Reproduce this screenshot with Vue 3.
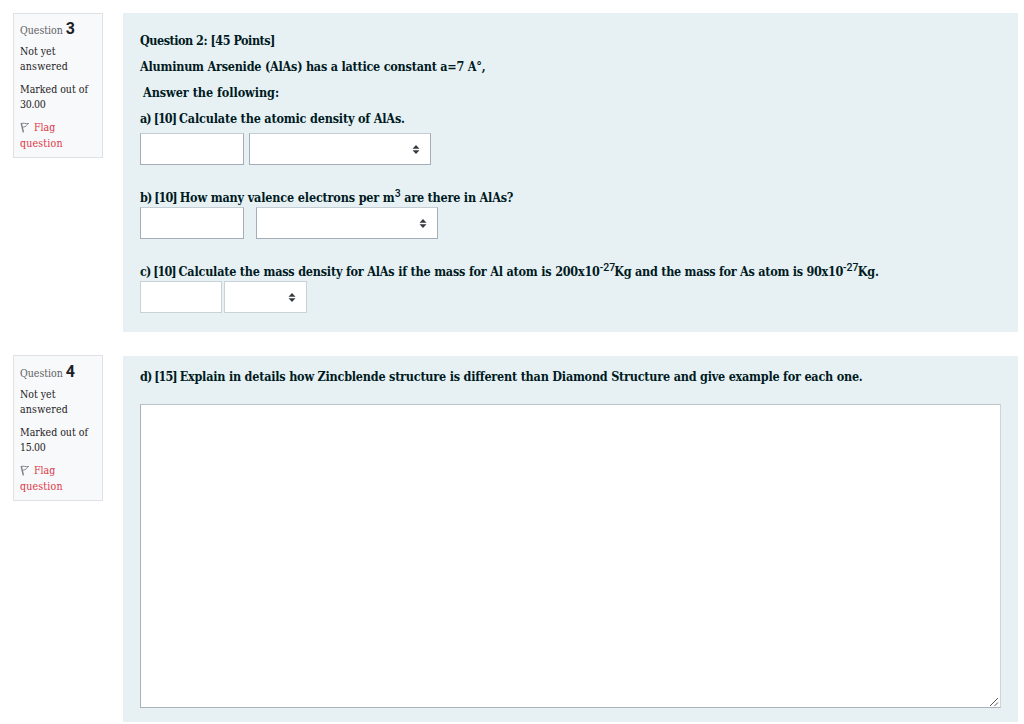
<template>
  <div class="quiz-page">
    <section v-for="q in questions" :key="q.number" class="question" :class="'question-' + q.number">
      <aside class="info">
        <h3 class="number">Question <span class="qno">{{ q.number }}</span></h3>
        <div class="state">Not yet<br><span class="wide">answered</span></div>
        <div class="grade">Marked out of<br><span class="points">{{ q.points }}</span></div>
        <div class="flag">
          <svg class="flag-icon" width="10" height="11" viewBox="0 0 10 11" fill="none" stroke="#777b7e">
            <path d="M1.2 1.2L3.4 10.4" stroke-width="1.4" />
            <path d="M1.2 1.5C3.5 .5 5.5 2.2 8.6 1.5C7.7 2.3 6.8 2.5 6.3 3.6C6 4.9 4.3 4.6 2.5 5.3" stroke-width=".9" />
          </svg>
          <a class="flag-link">Flag<br><span class="wide">question</span></a>
        </div>
      </aside>

      <div v-if="q.number === 3" class="content">
        <p class="line title">Question 2: [45 Points]</p>
        <p class="line lattice">Aluminum Arsenide (AlAs) has a lattice constant a=7 A°,</p>
        <p class="line follow">Answer the following:</p>
        <p class="line part-a"><span class="label">a) [10] </span>Calculate the atomic density of AlAs.</p>
        <div class="answer answer-a">
          <input v-model="answers.a" class="field" type="text">
          <div class="select"><svg class="caret" width="8" height="9" viewBox="0 0 8 9"><path d="M4 0L7.5 3.8H.5zM4 9L.5 5.2h7z" /></svg></div>
        </div>
        <p class="line part-b">
          <span class="label">b) [10] </span><span class="b-start">How many valence electrons per m</span><sup class="cube">3</sup><span class="b-end">are there in AlAs?</span>
        </p>
        <div class="answer answer-b">
          <input v-model="answers.b" class="field" type="text">
          <div class="select"><svg class="caret" width="8" height="9" viewBox="0 0 8 9"><path d="M4 0L7.5 3.8H.5zM4 9L.5 5.2h7z" /></svg></div>
        </div>
        <p class="line part-c">
          <span class="label">c) [10] </span><span class="c-start">Calculate the mass density for AlAs if the mass for Al atom is 200x10</span><sup>-27</sup><span class="c-mid">Kg and the mass for As atom is 90x10</span><sup>-27</sup><span class="c-end">Kg.</span>
        </p>
        <div class="answer answer-c">
          <input v-model="answers.c" class="field" type="text">
          <div class="select"><svg class="caret" width="8" height="9" viewBox="0 0 8 9"><path d="M4 0L7.5 3.8H.5zM4 9L.5 5.2h7z" /></svg></div>
        </div>
      </div>

      <div v-else class="content">
        <p class="line part-d"><span class="label">d) [15] </span>Explain in details how Zincblende structure is different than Diamond Structure and give example for each one.</p>
        <div class="essay-wrap">
          <textarea v-model="answers.d" class="essay"></textarea>
          <svg class="grip" width="10" height="10" viewBox="0 0 10 10" fill="none" stroke="#55585a">
            <path d="M1 9L9 1M5.5 9L9 5.5" />
          </svg>
        </div>
      </div>
    </section>
  </div>
</template>

<script setup>
import { reactive } from 'vue'

const questions = [
  { number: 3, points: '30.00' },
  { number: 4, points: '15.00' }
]

const answers = reactive({ a: '', b: '', c: '', d: '' })
</script>

<style>
body {
  margin: 0;
  background: #fff;
  overflow: hidden;
}
</style>

<style scoped>
.quiz-page {
  box-sizing: border-box;
  height: 724px;
  padding: 13px 6.5px 0 13px;
  font-family: "DejaVu Serif Condensed", "DejaVu Serif", serif;
  font-stretch: condensed;
}

.question {
  display: flex;
  align-items: flex-start;
  gap: 20px;
  margin-bottom: 24px;
}

.info {
  box-sizing: border-box;
  flex: none;
  width: 90px;
  height: 145px;
  padding: 8px 6px 0;
  border: 1px solid #dee2e6;
  background: #f8f9fa;
  color: #1d2125;
  font-size: 10.5px;
  line-height: 15.6px;
  white-space: nowrap;
}

.number {
  margin: 0 0 5.5px;
  height: 16px;
  font-size: 10.5px;
  font-weight: 300;
  line-height: 16px;
  color: #5c6064;
}

.qno {
  display: inline-block;
  font-family: Roboto, sans-serif;
  font-stretch: normal;
  font-size: 16px;
  font-weight: 700;
  line-height: 14px;
  color: #1d2125;
}

.wide {
  letter-spacing: 0.2px;
}

.points {
  letter-spacing: -0.3px;
}

.state,
.grade {
  margin-bottom: 7.2px;
}

.flag {
  color: #dc3545;
}

.flag-icon {
  margin-right: 4px;
  vertical-align: -2px;
}

.content {
  box-sizing: border-box;
  flex: 1;
  min-width: 0;
  height: 319px;
  padding: 17px 17px 0;
  background: #e7f1f4;
  color: #001a1e;
}

.line {
  box-sizing: border-box;
  margin: 0 0 6px;
  padding-top: 1px;
  height: 20px;
  font-size: 12.5px;
  font-weight: 700;
  line-height: 20px;
  white-space: nowrap;
}

.label { letter-spacing: -0.96px; }
.title { letter-spacing: -0.49px; }
.lattice { letter-spacing: -0.23px; }
.follow { padding-left: 3px; letter-spacing: -0.04px; }
.part-a { margin-bottom: 5px; letter-spacing: -0.18px; }
.part-b,
.part-c { margin-bottom: 0; }
.part-d { letter-spacing: -0.22px; }
.b-start { letter-spacing: -0.16px; }
.b-end { margin-left: 3.5px; letter-spacing: -0.21px; }
.c-start { letter-spacing: -0.21px; }
.c-mid { letter-spacing: -0.27px; }
.c-end { letter-spacing: -0.17px; }

sup {
  display: inline-block;
  width: 14.6px;
  font-family: Roboto, sans-serif;
  font-stretch: normal;
  font-size: 10.5px;
  font-weight: 500;
  line-height: 0;
  vertical-align: 5px;
}

.cube {
  width: 6px;
}

.answer {
  display: flex;
  height: 32px;
}

.answer-a {
  gap: 5px;
  margin-bottom: 22px;
}

.answer-b {
  gap: 12px;
  margin-bottom: 22px;
}

.answer-c {
  gap: 2px;
}

.field,
.select {
  box-sizing: border-box;
  width: 104px;
  height: 32px;
  margin: 0;
  padding: 0 8px;
  border: 1px solid #a4adb8;
  border-top-color: #c4cdd3;
  border-radius: 0;
  outline: 0;
  background: #fff;
}

.select {
  display: flex;
  align-items: center;
  justify-content: flex-end;
  width: 182px;
  padding-right: 10px;
}

.answer-c .field,
.answer-c .select {
  width: 82px;
  border-color: #c8d2d8;
}

.answer-c .select {
  width: 83px;
}

.caret {
  fill: #343a40;
}

.question-4 .info {
  height: 146px;
  margin-top: -1px;
  padding-top: 9px;
}

.question-4 .content {
  height: 366px;
  padding-top: 10px;
}

.question-4 .line {
  margin-bottom: 18px;
}

.essay-wrap {
  position: relative;
  width: 861px;
  height: 304px;
}

.essay {
  box-sizing: border-box;
  display: block;
  width: 100%;
  height: 100%;
  margin: 0;
  border: 1px solid #aab3bb;
  border-top-color: #bcc4ca;
  border-right-color: #ccd6da;
  border-radius: 0;
  outline: 0;
  resize: none;
}

.grip {
  position: absolute;
  right: 2px;
  bottom: 1px;
}
</style>
